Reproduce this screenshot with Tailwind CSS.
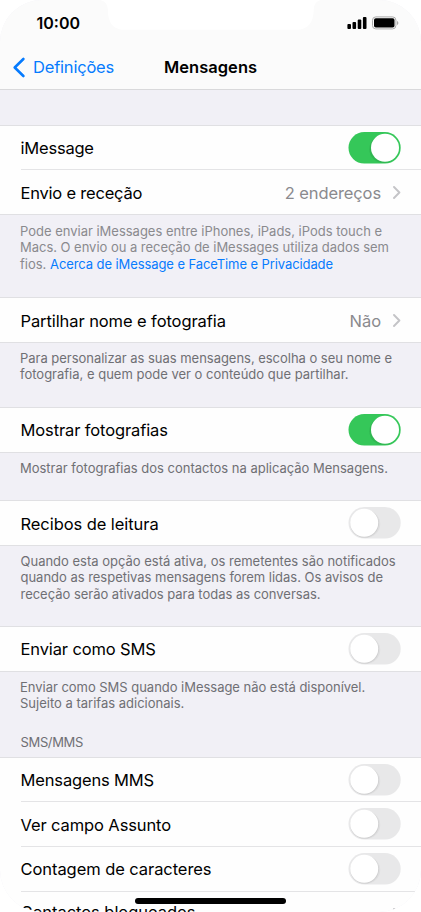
<!DOCTYPE html>
<html lang="pt">
<head>
<meta charset="utf-8">
<meta name="viewport" content="width=device-width, initial-scale=1">
<title>Mensagens</title>
<script src="https://cdn.jsdelivr.net/npm/@tailwindcss/browser@4"></script>
</head>
<body class="bg-white">
<svg width="0" height="0" class="absolute">
  <defs>
    <symbol id="chevron" viewBox="0 0 8 13"><path d="M1 1 L6.4 6.5 L1 12" fill="none" stroke="#c4c4c7" stroke-width="1.9" stroke-linecap="round" stroke-linejoin="round"/></symbol>
    <symbol id="on" viewBox="0 0 53 32">
      <rect x=".5" y="0" width="52.2" height="31.6" rx="15.8" fill="#35c759"/>
      <ellipse cx="35.6" cy="17.2" rx="14.3" ry="13.9" fill="#000" opacity=".08"/>
      <circle cx="37" cy="15.8" r="14" fill="#fff"/>
    </symbol>
    <symbol id="off" viewBox="0 0 53 32">
      <rect x=".5" y="0" width="52.2" height="31.6" rx="15.8" fill="#e8e8e9"/>
      <ellipse cx="17.3" cy="17" rx="15" ry="14.2" fill="#000" opacity=".035"/>
      <ellipse cx="16.5" cy="16.4" rx="14.4" ry="14.2" fill="#000" opacity=".07"/>
      <circle cx="16.2" cy="15.8" r="14" fill="#fff"/>
    </symbol>
  </defs>
</svg>
<main class="relative w-[421px] h-[912px] overflow-hidden rounded-[42px] bg-[#f1f0f6] font-[Inter,sans-serif] text-[16.5px] leading-[22px] text-black whitespace-nowrap">
  <header class="relative h-[90px] bg-[#fbfbfb] border-b border-[#d9d9db]">
    <svg class="absolute left-0 top-0" width="421" height="32" viewBox="0 0 421 32"><path d="M100 0 C105 1 107.5 4 107.8 9 C108 22 112 29.6 125 29.8 H296 C309 29.6 313.5 22 313.8 9 C314 4 316.5 1 321 0 Z" fill="#fff"/></svg>
    <div class="flex items-center h-[46px] pl-[36.5px] pr-[21px]">
      <span class="text-[16px] font-semibold">10:00</span>
      <svg class="ml-auto" width="53" height="14" viewBox="0 0 53 14">
        <rect x=".4" y="8" width="3.6" height="5" rx="1"/><rect x="5.5" y="6" width="3.6" height="7" rx="1"/><rect x="10.7" y="3.5" width="3.6" height="9.5" rx="1"/><rect x="15.9" y="1" width="3.6" height="12" rx="1"/>
        <rect x="25.5" y=".9" width="23.4" height="12" rx="3.3" fill="none" stroke="#aaa"/>
        <rect x="27" y="2.3" width="20.5" height="9.2" rx="1.8"/>
        <path d="M50 5 q1.4 .4 1.4 2 t-1.4 2z" fill="#aaa"/>
      </svg>
    </div>
    <div class="relative flex items-center h-[42px] pl-[12px]">
      <svg width="14" height="21" viewBox="0 0 14 21"><path d="M11.4 2 L2.7 10.5 L11.4 19" fill="none" stroke="#067bfe" stroke-width="2.6" stroke-linecap="round" stroke-linejoin="round"/></svg>
      <span class="ml-[7px] tracking-[-0.2px] text-[#067bfe]">Definições</span>
      <h1 class="absolute left-[164px] font-semibold tracking-[0.03px]">Mensagens</h1>
    </div>
  </header>

  <section class="mt-[35px] border-y border-[#e0e0e3] bg-[#fefefe] pl-[20.5px] h-[90px]">
    <div class="flex items-center justify-between h-[44px] pr-5 border-b border-[#e4e4e6]"><span class="pt-px tracking-[-0.21px]">iMessage</span><svg width="53" height="32"><use href="#on"/></svg></div>
    <div class="flex items-center h-[44px] pr-5"><span class="pt-0.5 tracking-[-0.21px]">Envio e receção</span><span class="pt-0.5 ml-auto tracking-[-0.11px] text-[#8a8a8e]">2 endereços</span><svg class="ml-3" width="8" height="13"><use href="#chevron"/></svg></div>
  </section>
  <p class="h-[82px] pt-2 pl-[20px] text-[13px] leading-[16.3px] text-[#8a8a8e]"><span class="tracking-[-0.01px]">Pode enviar iMessages entre iPhones, iPads, iPods touch e</span><br><span class="tracking-[-0.03px]">Macs. O envio ou a receção de iMessages utiliza dados sem</span><br>fios. <span class="tracking-[-0.09px] text-[#067bfe]">Acerca de iMessage e FaceTime e Privacidade</span></p>

  <section class="flex items-center h-[46px] pl-[20.5px] pr-5 border-y border-[#e0e0e3] bg-[#fefefe]"><span class="pt-0.5 tracking-[-0.09px]">Partilhar nome e fotografia</span><span class="pt-0.5 ml-auto tracking-[-0.04px] text-[#8a8a8e]">Não</span><svg class="ml-3" width="8" height="13"><use href="#chevron"/></svg></section>
  <p class="h-[64px] pt-[7px] pl-[20px] text-[13px] leading-[16.3px] text-[#6f6f74]"><span class="tracking-[-0.03px]">Para personalizar as suas mensagens, escolha o seu nome e</span><br>fotografia, e quem pode ver o conteúdo que partilhar.</p>

  <section class="flex items-center justify-between h-[46px] pl-[20.5px] pr-5 border-y border-[#e0e0e3] bg-[#fefefe]"><span class="tracking-[-0.12px]">Mostrar fotografias</span><svg width="53" height="32"><use href="#on"/></svg></section>
  <p class="h-[47px] pt-[7px] pl-[20px] text-[13px] leading-[16.3px] tracking-[-0.01px] text-[#6f6f74]">Mostrar fotografias dos contactos na aplicação Mensagens.</p>

  <section class="flex items-center justify-between h-[46px] pl-[20.5px] pr-5 border-y border-[#e0e0e3] bg-[#fefefe]"><span class="pt-0.5 tracking-[-0.07px]">Recibos de leitura</span><svg width="53" height="32"><use href="#off"/></svg></section>
  <p class="h-[80px] pt-[7px] pl-[20.5px] text-[13px] leading-[16.3px] tracking-[-0.02px] text-[#6f6f74]"><span class="tracking-[0px]">Quando esta opção está ativa, os remetentes são notificados</span><br>quando as respetivas mensagens forem lidas. Os avisos de<br>receção serão ativados para todas as conversas.</p>

  <section class="flex items-center justify-between h-[46px] pl-[20.5px] pr-5 border-y border-[#e0e0e3] bg-[#fefefe]"><span class="tracking-[-0.13px]">Enviar como SMS</span><svg width="53" height="32"><use href="#off"/></svg></section>
  <p class="h-[62px] pt-[7px] pl-[20px] text-[13px] leading-[16.3px] text-[#6f6f74]"><span class="tracking-[-0.03px]">Enviar como SMS quando iMessage não está disponível.</span><br>Sujeito a tarifas adicionais.</p>
  <h2 class="h-[23px] pl-[20.5px] text-[13px] leading-[16px] tracking-[-0.35px] text-[#6f6f74]">SMS/MMS</h2>

  <section class="h-[160px] pl-[20.5px] border-t border-[#e0e0e3] bg-[#fefefe]">
    <div class="flex items-center justify-between h-[44px] pr-5 border-b border-[#e4e4e6]"><span class="tracking-[-0.15px]">Mensagens MMS</span><svg width="53" height="32"><use href="#off"/></svg></div>
    <div class="flex items-center justify-between h-[45px] pr-5 border-b border-[#e4e4e6]"><span class="pt-0.5 tracking-[-0.11px]">Ver campo Assunto</span><svg width="53" height="32"><use href="#off"/></svg></div>
    <div class="flex items-center justify-between h-[45px] pr-5 border-b border-[#e4e4e6]"><span class="tracking-[-0.07px]">Contagem de caracteres</span><svg width="53" height="32"><use href="#off"/></svg></div>
    <div class="flex items-center justify-between h-[44px] pr-5"><span class="pb-1 tracking-[-0.05px]">Contactos bloqueados</span><svg width="8" height="13"><use href="#chevron"/></svg></div>
  </section>
  <div class="absolute left-[135px] top-[898px] w-[151px] h-[6px] rounded-full bg-black"></div>
</main>
</body>
</html>
